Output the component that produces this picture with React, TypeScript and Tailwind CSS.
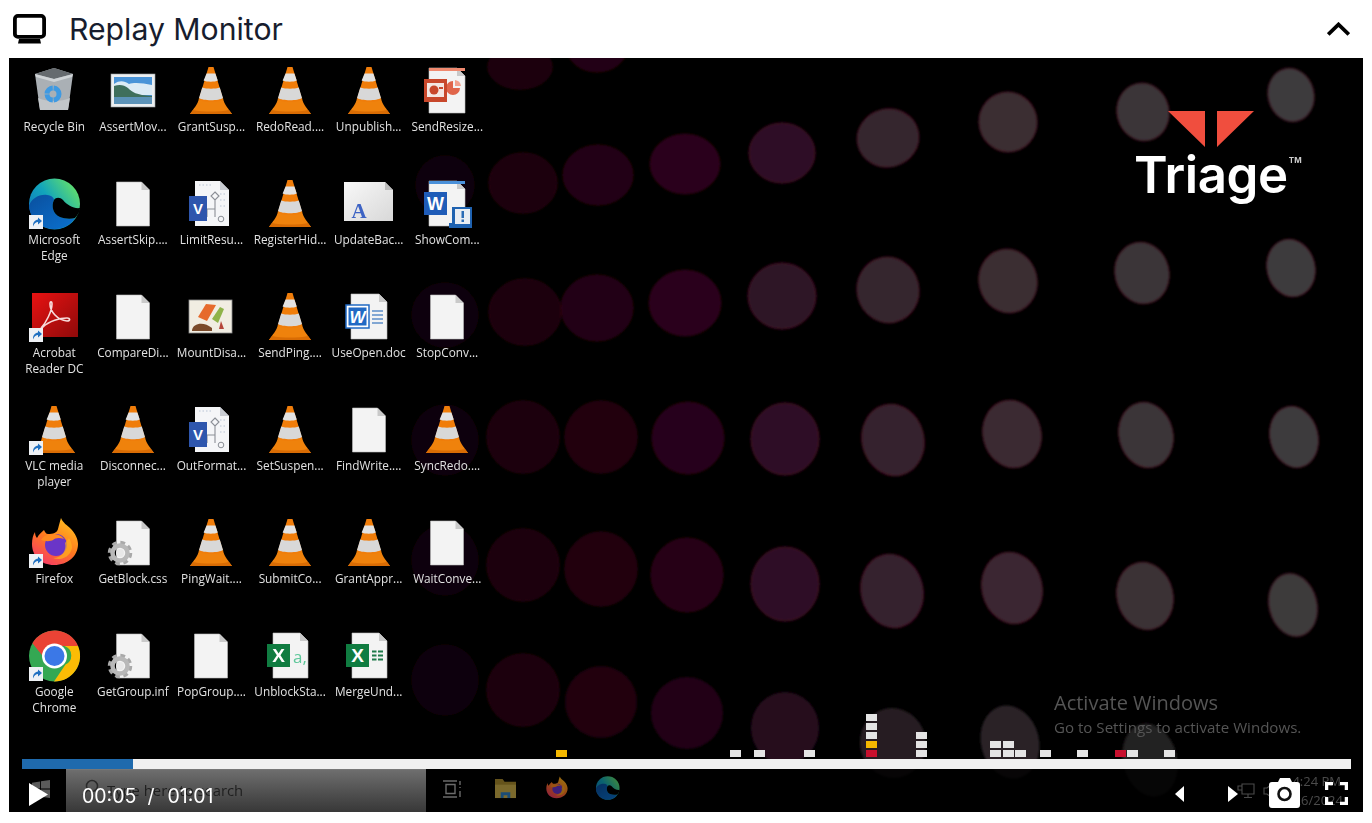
const dots = [
  // top edge
  [520, 67, 32, 22, "#1f000f"], [597, 48, 30, 24, "#240012"],
  // row 1
  [523, 183, 34, 30, "#1f000f"], [598, 175, 35, 30, "#240015"], [685, 164, 35, 30, "#2a001c"], [782, 153, 33, 30, "#2e1026"], [888, 138, 31, 29, "#35262f"], [1008, 122, 29, 30, "#3a2e33"], [1143, 112, 26, 29, "#3a3638"], [1291, 95, 23, 27, "#3d3b3c"],
  // row 2
  [525, 312, 36, 33, "#1f000f"], [597, 308, 36, 33, "#240014"], [685, 303, 36, 33, "#2a001e"], [782, 296, 34, 33, "#2e1228"], [888, 290, 31, 33, "#35262f"], [1008, 281, 29, 32, "#3a2e33"], [1142, 273, 27, 31, "#3a3638"], [1291, 268, 24, 29, "#3d3b3c"],
  // row 3
  [523, 437, 36, 36, "#1f000f"], [601, 437, 36, 36, "#220011"], [688, 438, 36, 36, "#28001c"], [785, 439, 34, 36, "#2e0d26"], [893, 440, 31, 36, "#35242d"], [1012, 434, 29, 34, "#3a2c33"], [1146, 435, 27, 33, "#3a3638"], [1294, 437, 24, 31, "#3d3b3c"],
  // row 4
  [523, 565, 36, 36, "#1f000f"], [601, 569, 36, 37, "#220011"], [687, 575, 36, 37, "#280018"], [785, 584, 34, 37, "#2e1026"], [892, 591, 31, 37, "#35202f"], [1012, 588, 30, 36, "#3a2831"], [1145, 596, 28, 34, "#3a3235"], [1293, 605, 24, 32, "#3c3a3b"],
  // row 5
  [523, 690, 36, 36, "#1f000f"], [601, 702, 36, 36, "#200010"], [687, 713, 36, 36, "#240015"], [785, 728, 34, 36, "#260a1e"], [893, 743, 33, 35, "#261e22"], [1010, 742, 29, 37, "#2a2226"], [1150, 760, 27, 37, "#232022"],
  // faint ones behind the icons
  [445, 185, 30, 30, "#0c0107"], [445, 315, 34, 33, "#0c0107"], [445, 440, 34, 36, "#0c0107"], [445, 560, 34, 36, "#0c0107"], [445, 680, 34, 36, "#0c0107"],
] as const;

function rimFor(cx: number, cy: number) {
  if (cx < 500 || cy > 700) return "none";
  if (cx < 760) return "#2e0012";
  return "#4a1024";
}

function Wallpaper() {
  return (
    <svg className="absolute inset-0 w-full h-full" viewBox="0 0 1354 754">
      <defs>
        <filter id="soft">
          <feGaussianBlur stdDeviation="1" />
        </filter>
      </defs>
      <g transform="translate(-9 -58)" filter="url(#soft)">
        {dots.map(([cx, cy, rx, ry, fill], i) => (
          <ellipse
            key={i}
            cx={cx}
            cy={cy}
            rx={rx}
            ry={ry}
            fill={fill}
            stroke={rimFor(cx, cy)}
            strokeWidth="1"
            transform={cx > 880 ? `rotate(-14 ${cx} ${cy})` : undefined}
          />
        ))}
      </g>
    </svg>
  );
}

function Icon({ children, size = 54 }: { children: React.ReactNode; size?: number }) {
  return (
    <svg width={size} height={size} viewBox="0 0 54 54" className="shrink-0">
      {children}
    </svg>
  );
}

function Shortcut() {
  return (
    <g>
      <rect x="2" y="37" width="14" height="14" fill="#eef1f5" />
      <path d="M6 48c0-4 2-6 5-6.500V39.500l4 3.500-4 3.500v-2.500c-2 0-3.500 1-5 4.500z" fill="#1f6fc0" />
    </g>
  );
}

function ConeShape() {
  return (
    <g>
      <path d="M15 33C14 40 9 44 6 49H48C45 44 40 40 39 33c-3 4-21 4-24 0z" fill="#ef820c" />
      <path d="M9 45c9 2 27 2 36 0l3 4H6z" fill="#d96c04" />
      <path d="M24.500 2h5L39 34c-3 4-21 4-24 0z" fill="#f07d0a" />
      <path d="M22.600 8.500h8.800l2.400 7c-3 1.600-11 1.600-14.200 0z" fill="#e2e2e2" />
      <path d="M18.200 22.500c4 1.600 13.600 1.600 17.600 0L39 33c-4 3-20 3-24 0z" fill="#d8d8d8" />
    </g>
  );
}

function Cone() {
  return (
    <Icon>
      <ConeShape />
    </Icon>
  );
}

function Vlc() {
  return (
    <Icon>
      <ConeShape />
      <Shortcut />
    </Icon>
  );
}

function DocShape({ x = 10.500, w = 33, y = 4, h = 44 }: { x?: number; w?: number; y?: number; h?: number }) {
  const r = x + w;
  return (
    <g>
      <path d={`M${x} ${y}H${r - 8}L${r} ${y + 8}V${y + h}H${x}z`} fill="#f3f3f3" stroke="#bdbdbd" strokeWidth="0.6" />
      <path d={`M${r - 8} ${y}V${y + 8}H${r}z`} fill="#c9c9c9" />
    </g>
  );
}

function Doc() {
  return (
    <Icon>
      <DocShape />
    </Icon>
  );
}

function Gear() {
  return (
    <g>
      <circle cx="14" cy="36" r="10" fill="none" stroke="#a9a9a9" strokeWidth="4.500" strokeDasharray="4.500 3.360" />
      <circle cx="14" cy="36" r="7.500" fill="none" stroke="#b8b8b8" strokeWidth="4.500" />
      <circle cx="14" cy="36" r="4" fill="#e8e8e8" />
    </g>
  );
}

function GearDoc() {
  return (
    <Icon>
      <DocShape />
      <Gear />
    </Icon>
  );
}

function Bin() {
  return (
    <Icon>
      <path d="M8 9l19-6 19 6-5 36H13z" fill="#aab0b5" />
      <path d="M8 9l19-6 19 6-19 5z" fill="#666b6f" />
      <path d="M8 9l19 5 19-5-1 3-18 5-18-5z" fill="#cfd3d6" />
      <path d="M13 45l-2-12c8 4 24 4 32 0l-2 12z" fill="#c2c6c9" />
      <circle cx="26" cy="29" r="6" fill="none" stroke="#3f9ae2" strokeWidth="5" strokeDasharray="8.500 .9" />
    </Icon>
  );
}

function Photo() {
  return (
    <Icon>
      <rect x="5" y="9" width="44" height="33" fill="#eceff1" stroke="#9aa0a4" strokeWidth="0.6" />
      <rect x="8" y="12" width="38" height="27" fill="#4a94d8" />
      <path d="M8 19c6-4 10-3 15 0 5-2 14-1 23 1v10H8z" fill="#dcebf5" />
      <path d="M8 21c6-2 10-1 14 2 4 4 8 7 24 8v3H8z" fill="#3f6f5c" />
      <rect x="8" y="32" width="38" height="7" fill="#5c93b8" />
    </Icon>
  );
}

function Ppt() {
  return (
    <Icon>
      <DocShape x={9} w={36} y={3} h={45} />
      <rect x="9" y="3" width="36" height="3" fill="#f08a70" />
      <path d="M33 16a7 7 0 1 0 7 7h-7z" fill="#e0654a" />
      <path d="M35 15a7 7 0 0 1 6 6h-6z" fill="#f2a08c" />
      <rect x="4" y="14" width="23" height="23" fill="#c8472b" />
      <rect x="7" y="18" width="17" height="14" fill="#f3e6e2" />
      <circle cx="14" cy="25" r="4.500" fill="#c8472b" />
      <rect x="19" y="22" width="4" height="2" fill="#c8472b" />
    </Icon>
  );
}

function WordAlert() {
  return (
    <Icon>
      <DocShape x={9} w={36} y={3} h={45} />
      <rect x="9" y="3" width="36" height="3" fill="#4a90d9" />
      <rect x="4" y="14" width="23" height="23" fill="#1f5cb8" />
      <text x="15.500" y="32" textAnchor="middle" fontSize="18" fontWeight="700" fill="#fff" fontFamily="'Liberation Sans', sans-serif">
        W
      </text>
      <path d="M32 29h20v21H29v-5h3z" fill="#1f62b0" />
      <rect x="35" y="31" width="15" height="15" fill="#e9edf2" />
      <rect x="41.500" y="33" width="2.500" height="7" fill="#2b6cb5" />
      <rect x="41.500" y="41.500" width="2.500" height="2.500" fill="#2b6cb5" />
    </Icon>
  );
}

function WordDoc() {
  return (
    <Icon>
      <DocShape x={9} w={36} y={3} h={45} />
      <path d="M30 20h11M30 24h11M30 28h11M30 32h11" stroke="#5d8fc9" strokeWidth="1.400" />
      <rect x="4" y="14" width="23" height="23" fill="#fff" stroke="#2169c4" strokeWidth="1.500" />
      <rect x="6.500" y="16.500" width="18" height="18" fill="#2169c4" />
      <text x="15.500" y="32" textAnchor="middle" fontSize="17" fontWeight="700" fontStyle="italic" fill="#fff" fontFamily="'Liberation Sans', sans-serif">
        W
      </text>
    </Icon>
  );
}

function Excel({ sheet }: { sheet: boolean }) {
  return (
    <Icon>
      <DocShape x={10} w={35} y={3} h={45} />
      {sheet ? (
        <path d="M30 20.500h4.500v2H30zM36 20.500h5v2h-5zM30 24.500h4.500v2H30zM36 24.500h5v2h-5zM30 28.500h4.500v2H30zM36 28.500h5v2h-5z" fill="#1f7a4a" />
      ) : (
        <text x="30" y="33" fontSize="17" fill="#5ec79a" fontFamily="'Open Sans', sans-serif">
          a,
        </text>
      )}
      <rect x="4" y="14" width="23" height="23" fill="#107c41" />
      <text x="15.500" y="32" textAnchor="middle" fontSize="19" fontWeight="700" fill="#fff" fontFamily="'Liberation Sans', sans-serif">
        X
      </text>
    </Icon>
  );
}

function Visio() {
  return (
    <Icon>
      <path d="M11 3h25l9 9v36H11z" fill="#f5f6f8" />
      <path d="M36 3v9h9z" fill="#c9ccd2" />
      <path d="M15 7h14M36 16h5M36 22h5M36 28h5" stroke="#b9c3d4" strokeWidth="1.200" strokeDasharray="1.500 2" />
      <path d="M31 14l4 4-4 4-4-4zM31 22v9M23 31h8v8M23 31v8" fill="none" stroke="#8b8f96" strokeWidth="1.100" />
      <circle cx="37" cy="41" r="2.800" fill="none" stroke="#8b8f96" strokeWidth="1" />
      <rect x="5" y="18" width="18" height="25" fill="#2e56ad" />
      <text x="14" y="36" textAnchor="middle" fontSize="15" fontWeight="700" fill="#fff" fontFamily="'Liberation Sans', sans-serif">
        V
      </text>
    </Icon>
  );
}

function FontFile() {
  return (
    <Icon>
      <defs>
        <linearGradient id="fontPage" x1="0" y1="0" x2="1" y2="1">
          <stop offset="0" stopColor="#f8f8f8" />
          <stop offset="1" stopColor="#d8d8d8" />
        </linearGradient>
      </defs>
      <path d="M2 4h41l8 8v31H2z" fill="url(#fontPage)" />
      <path d="M43 4v8h8z" fill="#bdbdbd" />
      <text x="17" y="40" textAnchor="middle" fontSize="21" fontWeight="700" fill="#3d63c4" fontFamily="'Liberation Serif', serif">
        A
      </text>
    </Icon>
  );
}

function Mount() {
  return (
    <Icon>
      <rect x="5" y="9" width="43" height="33" fill="#f1ede2" stroke="#8c8c8c" strokeWidth="0.800" />
      <path d="M14 26l8-13 10 1-9 16z" fill="#e66a2c" />
      <path d="M28 28l8-12 4 2-6 14z" fill="#8fb34a" />
      <path d="M8 39c1-7 12-9 20-2v3H8z" fill="#7a4a2a" />
      <path d="M37 30l3 8h-5z" fill="#b5463a" />
    </Icon>
  );
}

function Edge({ size = 54, shortcut = true }: { size?: number; shortcut?: boolean }) {
  return (
    <Icon size={size}>
      <defs>
        <linearGradient id="edgeTop" x1="0" y1="1" x2="1" y2="0.300">
          <stop offset="0" stopColor="#0f6cc0" />
          <stop offset="0.550" stopColor="#12a5bb" />
          <stop offset="1" stopColor="#5fdd6f" />
        </linearGradient>
        <linearGradient id="edgeLow" x1="0" y1="0" x2="1" y2="1">
          <stop offset="0" stopColor="#0a4f9e" />
          <stop offset="1" stopColor="#0b72cf" />
        </linearGradient>
      </defs>
      <circle cx="27.500" cy="26" r="25.500" fill="url(#edgeTop)" />
      <path d="M2 28c2-7 10-12 18-11 5 .5 7 3 7 5-3 6-1 14 6 17 5 2 11 2 15 1-4 7-12 11-20 11C14 51 3 41 2 28z" fill="url(#edgeLow)" />
      <path d="M53 30C47 31 40 27 36 22 33 19 29 19 27 22 24 28 26 36 33 39 38 41 44 41 48 40 51 37 53 33 53 30z" fill="#000" />
      {shortcut && <Shortcut />}
    </Icon>
  );
}

function Firefox({ size = 54, shortcut = true }: { size?: number; shortcut?: boolean }) {
  return (
    <Icon size={size}>
      <defs>
        <linearGradient id="foxBody" x1="0.800" y1="0" x2="0.200" y2="1">
          <stop offset="0" stopColor="#ffc21f" />
          <stop offset="0.500" stopColor="#ff7a1f" />
          <stop offset="1" stopColor="#f5366a" />
        </linearGradient>
      </defs>
      <path d="M34 1c2 5 6 7 10 11 5 5 7 11 7 15 0 12-10 21-24 21C14 48 5 39 5 27c0-5 1-9 3-12 0 3 1 5 2 6 2-4 5-6 7-8 1 2 2 4 4 4 5 0 9-1 10-5 1-4 2-8 3-11z" fill="url(#foxBody)" />
      <circle cx="29" cy="28" r="11" fill="#6a35c8" />
      <path d="M18 19c5-3 15-3 19 3-5-2-9-1-11 1-2 1-6 2-12 0 1-2 2-3 4-4z" fill="#ff8a1f" />
      <path d="M38 26c2 7-3 15-12 15 6 3 17 0 19-10 0-3-1-7-3-10z" fill="#ffb01f" opacity="0.700" />
      {shortcut && <Shortcut />}
    </Icon>
  );
}

function Chrome() {
  return (
    <Icon>
      <circle cx="27.500" cy="26" r="25.500" fill="#34a853" />
      <path d="M5.400 13.200A25.500 25.500 0 0 1 51 16H27.500a10 10 0 0 0-9.800 12.500z" fill="#ea4335" />
      <path d="M51 16a25.500 25.500 0 0 1-24 35.500l11.500-17a10 10 0 0 0-1-18.500z" fill="#fbbc05" />
      <circle cx="27.500" cy="26" r="12.500" fill="#fff" />
      <circle cx="27.500" cy="26" r="10" fill="#3b78e7" />
      <Shortcut />
    </Icon>
  );
}

function Acrobat() {
  return (
    <Icon>
      <defs>
        <linearGradient id="pdfRed" x1="0" y1="0" x2="1" y2="1">
          <stop offset="0" stopColor="#e81212" />
          <stop offset="1" stopColor="#8f0a0a" />
        </linearGradient>
      </defs>
      <rect x="5" y="2" width="46" height="44" fill="url(#pdfRed)" />
      <path d="M14 37c5-5 11-17 11-24 0-3-2-3-2 0 0 7 7 16 17 17 4 0 3-3 0-3-7 0-18 3-24 9z" fill="none" stroke="#f7dada" strokeWidth="1.600" />
      <Shortcut />
    </Icon>
  );
}

const desktop: [React.ReactNode, string][] = [
  [<Bin />, "Recycle Bin"],
  [<Photo />, "AssertMov..."],
  [<Cone />, "GrantSusp..."],
  [<Cone />, "RedoRead...."],
  [<Cone />, "Unpublish..."],
  [<Ppt />, "SendResize..."],
  [<Edge />, "Microsoft Edge"],
  [<Doc />, "AssertSkip...."],
  [<Visio />, "LimitResu..."],
  [<Cone />, "RegisterHid..."],
  [<FontFile />, "UpdateBac..."],
  [<WordAlert />, "ShowCom..."],
  [<Acrobat />, "Acrobat Reader DC"],
  [<Doc />, "CompareDi..."],
  [<Mount />, "MountDisa..."],
  [<Cone />, "SendPing...."],
  [<WordDoc />, "UseOpen.doc"],
  [<Doc />, "StopConv..."],
  [<Vlc />, "VLC media player"],
  [<Cone />, "Disconnec..."],
  [<Visio />, "OutFormat..."],
  [<Cone />, "SetSuspen..."],
  [<Doc />, "FindWrite...."],
  [<Cone />, "SyncRedo...."],
  [<Firefox />, "Firefox"],
  [<GearDoc />, "GetBlock.css"],
  [<Cone />, "PingWait...."],
  [<Cone />, "SubmitCo..."],
  [<Cone />, "GrantAppr..."],
  [<Doc />, "WaitConve..."],
  [<Chrome />, "Google Chrome"],
  [<GearDoc />, "GetGroup.inf"],
  [<Doc />, "PopGroup...."],
  [<Excel sheet={false} />, "UnblockSta..."],
  [<Excel sheet />, "MergeUnd..."],
];

// timeline markers: left edge on the page, slot counted from the bar upward, colour
const markers: [number, number, string][] = [
  [556, 0, "#f4b800"],
  [730, 0, "#e4e4e4"], [754, 0, "#e4e4e4"], [804, 0, "#e4e4e4"],
  [866, 0, "#c8102e"], [866, 1, "#f4b800"], [866, 2, "#e4e4e4"], [866, 3, "#e4e4e4"], [866, 4, "#e4e4e4"],
  [916, 0, "#e4e4e4"], [916, 1, "#e4e4e4"], [916, 2, "#e4e4e4"],
  [990, 0, "#e4e4e4"], [990, 1, "#e4e4e4"], [1003, 0, "#e4e4e4"], [1003, 1, "#e4e4e4"], [1015, 0, "#e4e4e4"],
  [1040, 0, "#e4e4e4"], [1077, 0, "#e4e4e4"], [1115, 0, "#c8102e"], [1127, 0, "#e4e4e4"], [1164, 0, "#e4e4e4"],
];

function Timeline() {
  return (
    <div className="relative">
      <div className="relative h-[2px]">
        {markers.map(([x, slot, color], i) => (
          <div
            key={i}
            className="absolute w-[11px] h-[7px]"
            style={{ left: x - 22, bottom: 2 + slot * 9, backgroundColor: color }}
          />
        ))}
      </div>
      <div className="h-[10px] bg-[#f0f0f0]">
        <div className="h-full w-[111px] bg-[#1f6aad]" />
      </div>
    </div>
  );
}

function Taskbar() {
  return (
    <div className="flex h-[43px] items-center bg-black/80">
      <div className="w-[57px] h-full flex items-center pl-[23px]">
        <svg width="18" height="18" viewBox="0 0 20 20" className="-mt-[3px]">
          <path d="M0 3l9-1.300V9.500H0zM10 1.500L20 0v9.500H10zM0 10.500h9v7.800L0 17zM10 10.500h10V20L10 18.500z" fill="#5a5a5a" />
        </svg>
      </div>
      <div className="relative w-[360px] h-full border-t border-[#777] bg-gradient-to-b from-[#6e6e6e] to-[#383838] flex items-center gap-[7px] pl-[16px] pb-[2px] text-[14.800px] text-[#1f1f1f] font-['Open_Sans',sans-serif]">
        <svg width="18" height="18" viewBox="0 0 18 18" fill="none" stroke="#2a2a2a" strokeWidth="1.500" className="shrink-0 mb-[4px]">
          <circle cx="10" cy="7" r="5.500" />
          <path d="M6 11l-5 5" />
        </svg>
        <span>Type here to search</span>
      </div>
      <svg width="18" height="18" viewBox="0 0 18 18" className="ml-[17px] mb-[4px] text-[#6b6b6b]" fill="none" stroke="currentColor" strokeWidth="1.400">
        <path d="M3 4.500h9v9H3zM0 1h14M0 17h14M17 1v4M17 7v1M17 11v6" />
      </svg>
      <svg width="23" height="21" viewBox="0 0 24 22" className="ml-[33px] mb-[4px] opacity-60">
        <path d="M1 1h8l2 3h12v17H1z" fill="#a88a2e" />
        <rect x="1" y="7" width="22" height="14" fill="#cdb04a" />
        <path d="M7 21v-6h10v6h-3v-3h-4v3z" fill="#2e7fc4" />
      </svg>
      <div className="ml-[27px] mb-[4px] opacity-60">
        <Firefox size={25} shortcut={false} />
      </div>
      <div className="ml-[26px] mb-[4px] opacity-60">
        <Edge size={25} shortcut={false} />
      </div>
      <div className="ml-auto flex items-center pr-[20px] gap-[8px] text-[#4b4b4b]">
        <svg width="18" height="16" viewBox="0 0 18 16" fill="none" stroke="currentColor" strokeWidth="1.100">
          <path d="M5 1h12v10H5zM1 3h4v4H1zM11 11v3M7 14.500h8" />
        </svg>
        <svg width="10" height="16" viewBox="0 0 10 16" fill="none" stroke="currentColor" strokeWidth="1.100">
          <path d="M1 5h3l5-4v14l-5-4H1z" />
        </svg>
        <div className="w-[62px] text-right text-[13px] leading-[19px] font-['Open_Sans',sans-serif]">
          <div className="pr-[2px]">4:24 PM</div>
          <div>6/26/2024</div>
        </div>
      </div>
    </div>
  );
}

function PlayerControls() {
  return (
    <div className="absolute inset-0 flex items-center text-white">
      <svg width="19" height="23" viewBox="0 0 19 23" className="ml-[20px] mt-[7px]">
        <path d="M0 0l19 11.500L0 23z" fill="currentColor" />
      </svg>
      <div className="ml-[34px] mt-[12px] flex text-[19.500px] font-['Inter',sans-serif]">
        <span>00:05</span>
        <span className="ml-[11px]">/</span>
        <span className="ml-[13px]">01:01</span>
      </div>
      <svg width="9" height="16" viewBox="0 0 9 16" className="ml-auto mt-[6px]">
        <path d="M9 0v16L0 8z" fill="currentColor" />
      </svg>
      <svg width="10" height="16" viewBox="0 0 10 16" className="ml-[44px] mt-[6px]">
        <path d="M0 0v16l10-8z" fill="currentColor" />
      </svg>
      <svg width="31" height="30" viewBox="0 0 31 30" className="ml-[31px] mt-[4px]">
        <path d="M3 4h6l2-4h10l2 4h5a3 3 0 0 1 3 3v20a3 3 0 0 1-3 3H3a3 3 0 0 1-3-3V7a3 3 0 0 1 3-3z" fill="currentColor" />
        <circle cx="15.500" cy="16" r="6" fill="none" stroke="#111" strokeWidth="2.600" />
      </svg>
      <svg width="23" height="23" viewBox="0 0 23 23" className="ml-[25px] mr-[15px] mt-[6px]" fill="none" stroke="currentColor" strokeWidth="3.500">
        <path d="M1.500 8V1.500H8M15 1.500h6.500V8M1.500 15v6.500H8M15 21.500h6.500V15" />
      </svg>
    </div>
  );
}

export default function App() {
  return (
    <div className="h-[823px] bg-white flex flex-col font-['Inter',sans-serif]">
      <div className="h-[58px] flex items-center justify-between pl-[13px] pr-[22px]">
        <div className="flex items-center gap-[24px]">
          <svg width="33" height="30" viewBox="0 0 33 30" className="text-black">
            <rect x="1.900" y="1.900" width="29.200" height="21" rx="3" fill="none" stroke="currentColor" strokeWidth="3.800" />
            <path d="M6 25h21l1 4.500H5z" fill="currentColor" />
          </svg>
          <h1 className="text-[30.200px] leading-none text-[#171d2e] -ml-[1px]">Replay Monitor</h1>
        </div>
        <svg width="23" height="14" viewBox="0 0 23 14" fill="none" stroke="#000" strokeWidth="3.800">
          <path d="M1.200 12.500L11.500 2.500 21.800 12.500" />
        </svg>
      </div>

      <div className="relative mx-[9px] h-[754px] bg-black flex flex-col overflow-hidden">
        <Wallpaper />
        <div className="relative flex-1 pt-[7px] pl-[6px]">
          <div className="grid grid-cols-[repeat(6,78.6px)] auto-rows-[113px] blur-[0.4px]">
            {desktop.map(([icon, label], i) => (
              <div key={i} className="flex flex-col items-center">
                {icon}
                <div className="w-[78px] -mt-[1px] text-center text-[11.800px] leading-[16px] text-[#e2e2e2] font-['Open_Sans',sans-serif]">
                  {label}
                </div>
              </div>
            ))}
          </div>

          <div className="absolute left-[1045px] top-[632px] text-[#555] font-['Open_Sans',sans-serif]">
            <div className="text-[20px] leading-[26px]">Activate Windows</div>
            <div className="text-[15.100px] leading-[20px] mt-[1px]">Go to Settings to activate Windows.</div>
          </div>

          <div className="absolute left-[1125px] top-[53px] text-white font-['Inter',sans-serif]">
            <svg width="87" height="37" viewBox="0 0 87 37" className="ml-[34px]">
              <path d="M0 0h37v36zM49 0h37L49 36z" fill="#f04e3e" />
            </svg>
            <div className="flex items-start">
              <span className="text-[51px] leading-[54px] font-semibold tracking-[-0.400px]">Triage</span>
              <span className="text-[8px] leading-none mt-[8px] ml-[1px] font-bold text-[#ccc]">TM</span>
            </div>
          </div>
        </div>

        <div className="relative mx-[13px] mr-[12px]">
          <Timeline />
        </div>
        <div className="relative">
          <Taskbar />
          <PlayerControls />
        </div>
      </div>
    </div>
  );
}
